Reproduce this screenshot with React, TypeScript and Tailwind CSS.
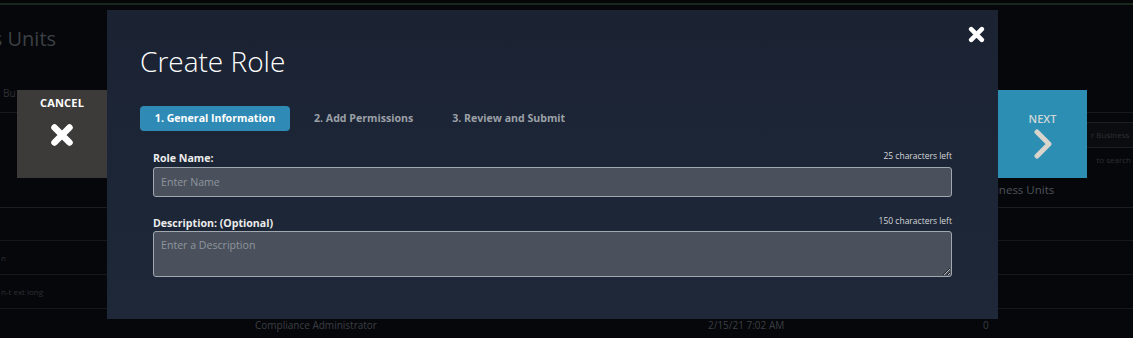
import React from "react";

function XIcon({ size, className }: { size: number; className?: string }) {
  return (
    <svg width={size} height={size} viewBox="0 0 24 24" className={className}>
      <path d="M4.5 4.5 L19.5 19.5 M19.5 4.5 L4.5 19.5" stroke="currentColor" strokeWidth={6.5} strokeLinecap="round" fill="none" />
    </svg>
  );
}

function Chevron() {
  return (
    <svg width="20" height="30" viewBox="0 0 20 30">
      <path d="M4 3 L16 15 L4 27" stroke="#d9d4cc" strokeWidth={5} strokeLinecap="round" strokeLinejoin="round" fill="none" />
    </svg>
  );
}

export default function App() {
  return (
    <div
      className="relative w-[1133px] h-[338px] overflow-hidden bg-[#06070a]"
      style={{ fontFamily: '"Open Sans", "Noto Sans", sans-serif' }}
    >
      {/* background page */}
      <div className="flex flex-col">
        <div className="h-[3px] bg-[#050608]" />
        <div className="h-[2px] bg-[#17271c]" />
        <div className="h-[20px]" />
        <div className="h-[28px] flex items-center whitespace-nowrap">
          <div className="ml-[-80px] text-[20px] text-[#3b4045] leading-[26px]">Business Units</div>
        </div>
        <div className="h-[29px]" />
        <div className="h-[22px] flex items-center text-[10px] text-[#2e3237] pl-[3px]">Bu</div>
        <div className="h-[8px]" />
        <div className="h-px bg-[#17191d]" />
        <div className="h-[9px]" />
        <div className="h-[26px] flex justify-end">
          <div className="w-[46px] h-full border-y border-[#1c1f23] bg-[#0b0c0f] text-[8px] text-[#2c3035] flex items-center pl-[4px] whitespace-nowrap overflow-hidden">
            r Business
          </div>
        </div>
        <div className="h-[24px] flex justify-end items-center pr-[2px] text-[8px] text-[#2c3035] whitespace-nowrap">
          to search
        </div>
        <div className="h-[35px] flex items-center pl-[976px] text-[11.5px] text-[#4d535b] whitespace-nowrap">
          Business Units
        </div>
        <div className="h-px bg-[#1a1d21]" />
        <div className="h-[32px]" />
        <div className="h-px bg-[#16181c]" />
        <div className="h-[33px] flex items-center text-[8px] text-[#2c3035] pl-[1px]">n</div>
        <div className="h-px bg-[#16181c]" />
        <div className="h-[33px] flex items-center text-[8px] text-[#2c3035] pl-[1px] whitespace-nowrap">n-t ext long</div>
        <div className="h-px bg-[#16181c]" />
        <div className="h-[33px] flex items-center text-[10px] text-[#3b3f45] whitespace-nowrap">
          <span className="ml-[255px] w-[453px]">Compliance Administrator</span>
          <span className="w-[275px]">2/15/21 7:02 AM</span>
          <span>0</span>
        </div>
      </div>

      {/* modal overlay */}
      <div className="absolute inset-0 flex items-start pt-[10px] pl-[17px]">
        <div className="mt-[80px] w-[90px] h-[88px] bg-[#3c3b39] flex flex-col items-center pt-[5px]">
          <div className="text-[11px] font-bold text-white tracking-[0.2px]">CANCEL</div>
          <XIcon size={24} className="text-white mt-[11px]" />
        </div>

        <div className="relative w-[891px] h-[309px] bg-gradient-to-b from-[#1b2333] to-[#1e2839] px-[33px] pt-[33px]">
          <button className="absolute right-[13px] top-[16px] text-white">
            <XIcon size={17} />
          </button>
          <h1 className="text-[28px] font-light text-white leading-[36px]">Create Role</h1>

          <div className="flex items-center mt-[27px] text-[10.6px] font-bold">
            <div className="w-[150px] h-[25px] rounded-[4px] bg-[#2f8ab5] text-white flex items-center justify-center">
              1. General Information
            </div>
            <div className="ml-[24px] text-[#9ba0a7]">2. Add Permissions</div>
            <div className="ml-[39px] text-[#9ba0a7]">3. Review and Submit</div>
          </div>

          <div className="ml-[13px] mr-[13px] mt-[18px]">
            <div className="flex items-end justify-between h-[17px]">
              <span className="text-[10.6px] font-bold text-[#ececec] leading-[15px]">Role Name:</span>
              <span className="text-[8.5px] text-[#d4d6d9] leading-[14px] mb-[3px]">25 characters left</span>
            </div>
            <input
              placeholder="Enter Name"
              className="block mt-[1px] w-full h-[30px] rounded-[3px] border border-[#a2a8b0] bg-[#4a515c] px-[7px] text-[10.6px] text-white placeholder:text-[#8f959d] outline-none"
            />

            <div className="flex items-end justify-between h-[17px] mt-[17px]">
              <span className="text-[10.6px] font-bold text-[#ececec] leading-[15px]">Description: (Optional)</span>
              <span className="text-[8.5px] text-[#d4d6d9] leading-[14px] mb-[3px]">150 characters left</span>
            </div>
            <textarea
              placeholder="Enter a Description"
              className="block mt-[0px] w-full h-[46px] rounded-[3px] border border-[#a2a8b0] bg-[#4a515c] px-[7px] py-[6px] text-[10.6px] text-white placeholder:text-[#8f959d] outline-none"
            />
          </div>
        </div>

        <div className="mt-[80px] w-[89px] h-[88px] bg-[#2b8eb2] flex flex-col items-center pt-[21px]">
          <div className="text-[11px] font-semibold text-[#cfd6d8]">NEXT</div>
          <div className="mt-[1px]">
            <Chevron />
          </div>
        </div>
      </div>
    </div>
  );
}
